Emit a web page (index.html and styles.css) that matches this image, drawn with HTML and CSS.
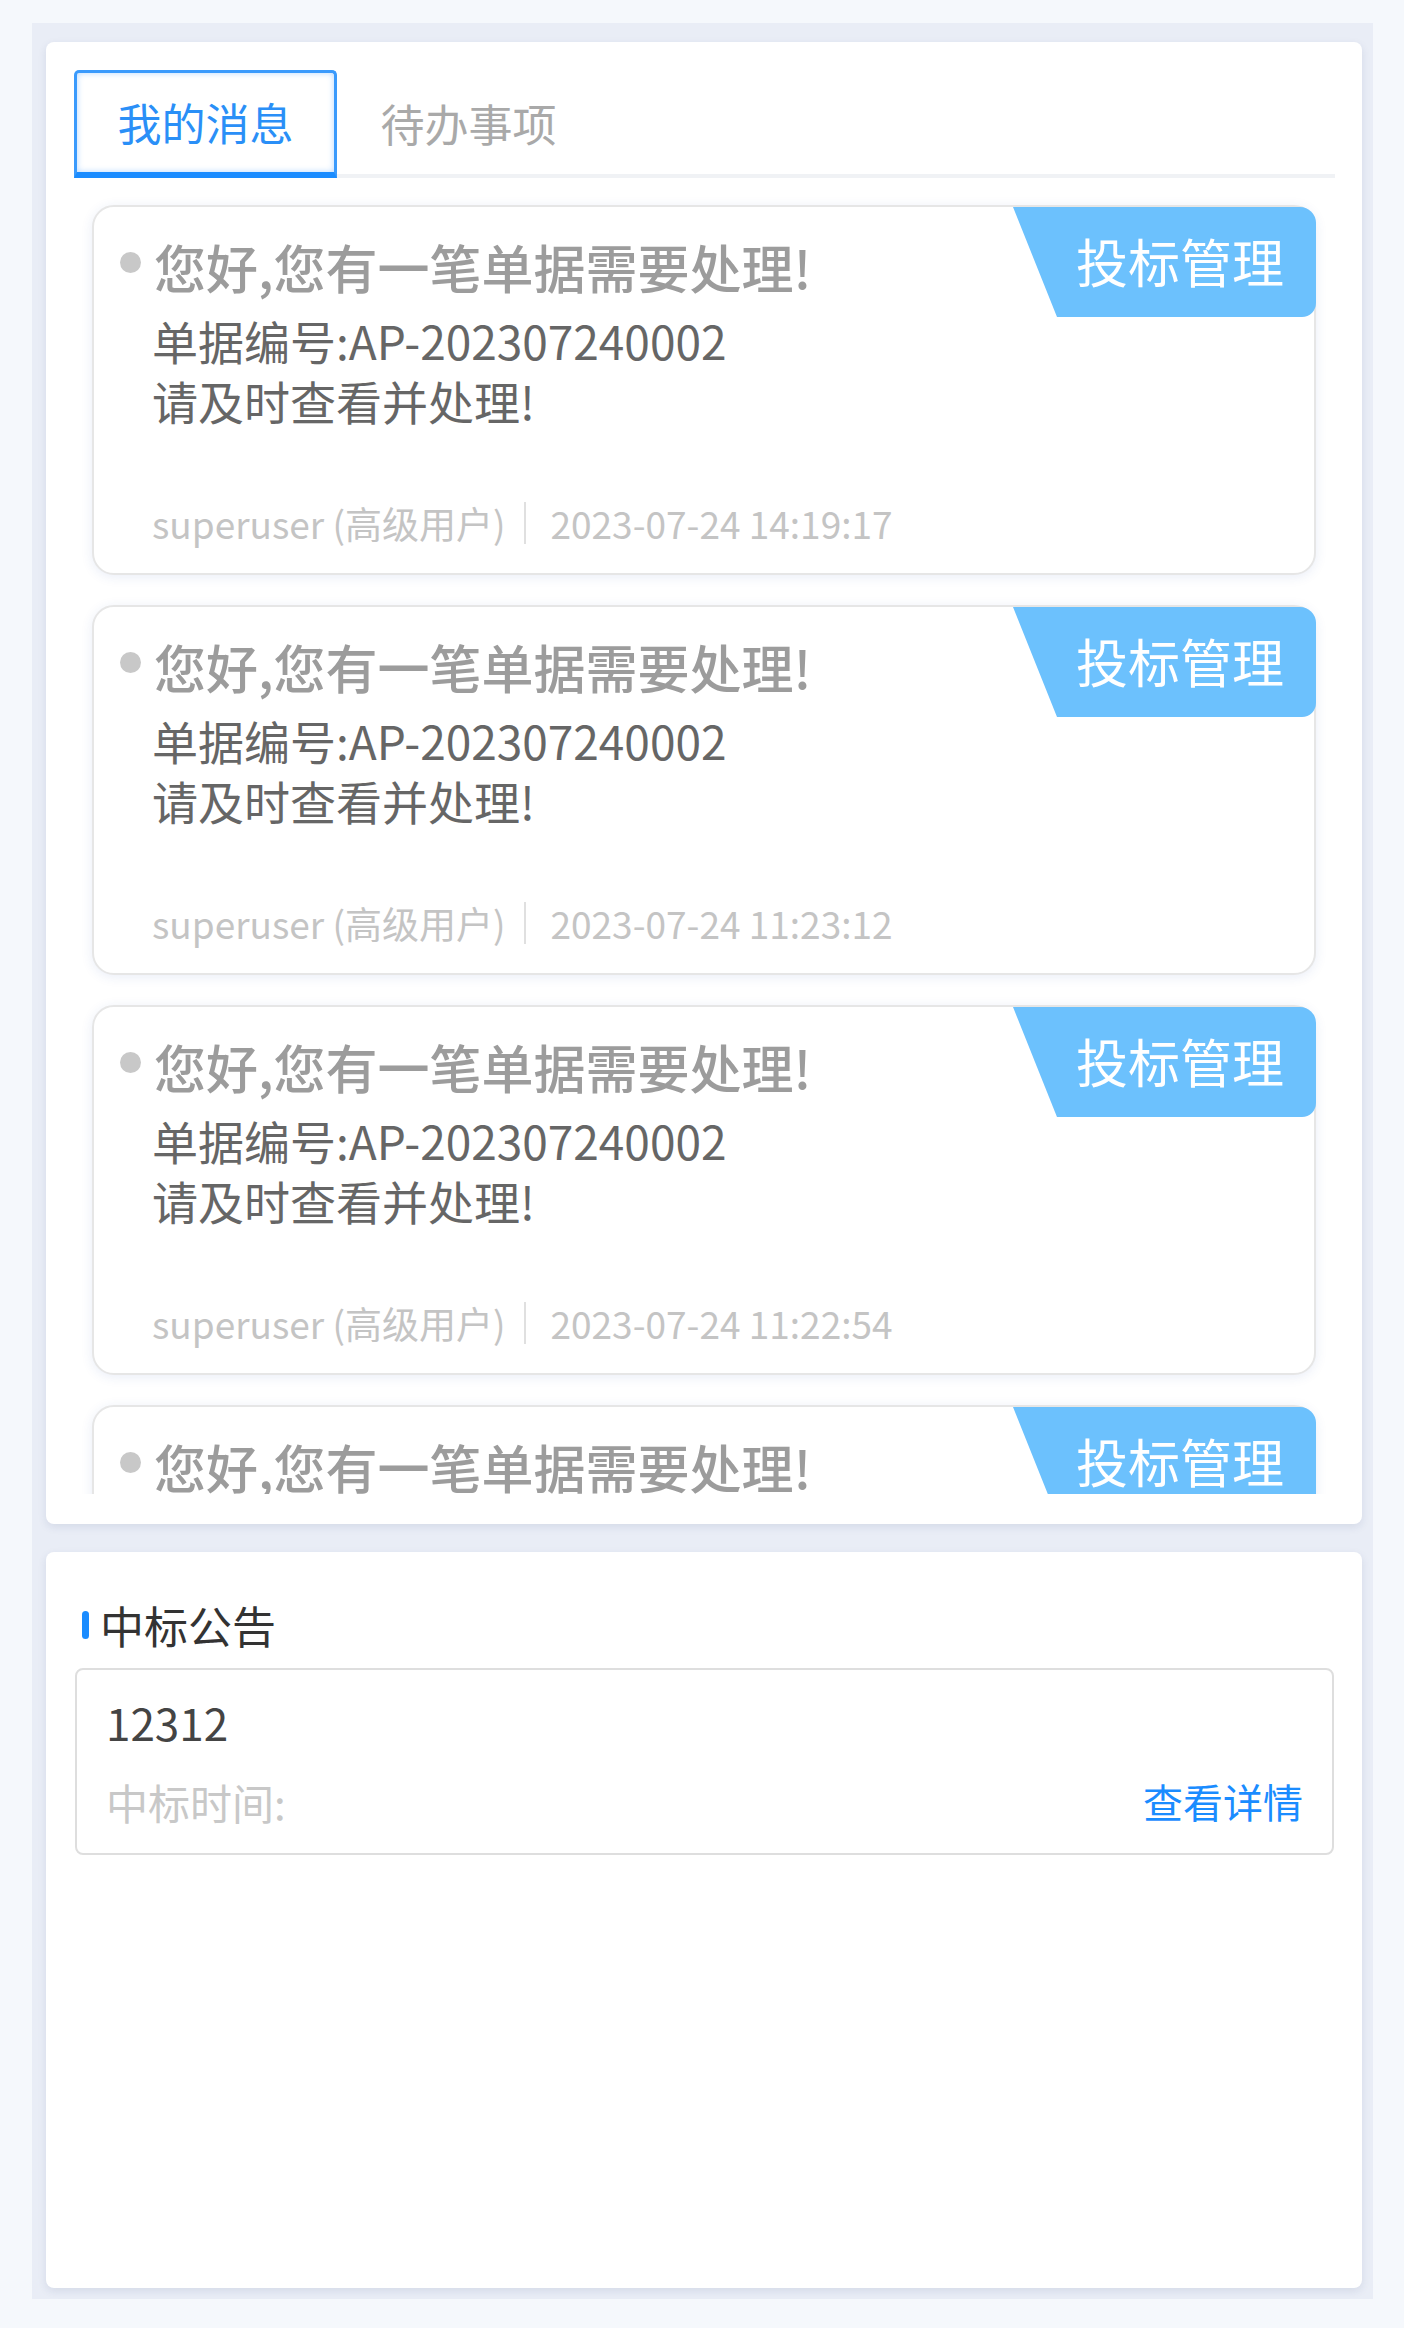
FILE: index.html
```html
<!DOCTYPE html>
<html lang="zh-CN">
<head>
<meta charset="utf-8">
<title>消息</title>
<link rel="stylesheet" href="styles.css">
</head>
<body>
<div class="page">
  <div class="panel">
    <section class="card messages">
      <div class="tabs">
        <div class="tab active">我的消息</div>
        <div class="tab">待办事项</div>
      </div>
      <div class="msg-list">
        <div class="msg">
          <span class="badge">投标管理</span>
          <div class="msg-title"><span class="dot"></span>您好,您有一笔单据需要处理!</div>
          <div class="msg-body">单据编号:AP-202307240002<br>请及时查看并处理!</div>
          <div class="msg-meta"><span>superuser (高级用户)</span><span class="sep"></span><span>2023-07-24 14:19:17</span></div>
        </div>
        <div class="msg">
          <span class="badge">投标管理</span>
          <div class="msg-title"><span class="dot"></span>您好,您有一笔单据需要处理!</div>
          <div class="msg-body">单据编号:AP-202307240002<br>请及时查看并处理!</div>
          <div class="msg-meta"><span>superuser (高级用户)</span><span class="sep"></span><span>2023-07-24 11:23:12</span></div>
        </div>
        <div class="msg">
          <span class="badge">投标管理</span>
          <div class="msg-title"><span class="dot"></span>您好,您有一笔单据需要处理!</div>
          <div class="msg-body">单据编号:AP-202307240002<br>请及时查看并处理!</div>
          <div class="msg-meta"><span>superuser (高级用户)</span><span class="sep"></span><span>2023-07-24 11:22:54</span></div>
        </div>
        <div class="msg">
          <span class="badge">投标管理</span>
          <div class="msg-title"><span class="dot"></span>您好,您有一笔单据需要处理!</div>
          <div class="msg-body">单据编号:AP-202307240002<br>请及时查看并处理!</div>
          <div class="msg-meta"><span>superuser (高级用户)</span><span class="sep"></span><span>2023-07-24 11:20:31</span></div>
        </div>
      </div>
    </section>
    <section class="card notice">
      <div class="notice-title"><span class="bar"></span>中标公告</div>
      <div class="notice-box">
        <div class="notice-name">12312</div>
        <div class="notice-row">
          <span class="notice-time">中标时间:</span>
          <span class="notice-link">查看详情</span>
        </div>
      </div>
    </section>
  </div>
</div>
</body>
</html>
```
FILE: styles.css
```css
* { box-sizing: border-box; }
html, body {
  margin: 0;
  padding: 0;
  background: #f5f8fc;
  font-family: "Noto Sans CJK SC", "Noto Sans", "Liberation Sans", sans-serif;
}
.page {
  padding: 23px 31px 29px 32px;
}
.panel {
  background: #e9edf6;
  padding: 19px 11px 11px 14px;
  display: flex;
  flex-direction: column;
  gap: 28px;
}
.card {
  background: #fff;
  border-radius: 8px;
  box-shadow: 0 3px 8px rgba(30, 50, 110, 0.10);
}
.messages {
  height: 1482px;
  padding: 28px 27px 30px 28px;
}
.tabs {
  display: flex;
  height: 108px;
  border-bottom: 4px solid #f0f2f5;
}
.tab {
  width: 263px;
  height: 108px;
  margin-bottom: -4px;
  display: flex;
  align-items: center;
  justify-content: center;
  font-size: 44px;
  color: #a9a9a9;
  padding-bottom: 2px;
}
.tab.active {
  color: #2a8ff7;
  border: 3px solid #3a9afc;
  border-bottom: 6px solid #1a8cff;
  border-radius: 5px 5px 0 0;
  box-shadow: inset 0 0 6px rgba(40, 140, 255, 0.35);
}
.msg-list {
  height: 1316px;
  overflow: hidden;
  padding: 27px 19px 0 18px;
  display: flex;
  flex-direction: column;
  gap: 30px;
}
.msg {
  position: relative;
  flex: none;
  height: 370px;
  border: 2px solid #e6e6e6;
  border-radius: 22px;
  background: #fff;
  box-shadow: 0 2px 12px rgba(40, 80, 180, 0.10);
  padding: 28px 0 25px 26px;
  display: flex;
  flex-direction: column;
}
.badge {
  position: absolute;
  top: 0;
  right: -2px;
  width: 303px;
  height: 110px;
  background: #6cc1fd;
  color: #fff;
  font-size: 52px;
  line-height: 108px;
  text-align: right;
  padding-right: 32px;
  border-radius: 0 16px 14px 0;
  clip-path: polygon(0 0, 100% 0, 100% 100%, 44px 100%);
}
.msg-title {
  display: flex;
  align-items: center;
  font-size: 52px;
  line-height: 64px;
  font-weight: 500;
  color: #9c9c9c;
}
.dot {
  width: 21px;
  height: 21px;
  border-radius: 50%;
  background: #c8c8c8;
  margin-right: 13px;
  margin-bottom: 10px;
  flex: none;
}
.msg-body {
  margin-top: 11px;
  padding-left: 32px;
  font-size: 46px;
  line-height: 60px;
  color: #666;
}
.msg-meta {
  margin-top: auto;
  padding-left: 32px;
  display: flex;
  align-items: center;
  height: 50px;
  font-size: 37px;
  color: #c4c4c4;
}
.sep {
  width: 2px;
  height: 42px;
  background: #e0e0e0;
  margin: 0 25px 0 18px;
}
.notice {
  height: 736px;
  padding: 43px 28px 0 29px;
}
.notice-title {
  display: flex;
  align-items: center;
  padding-left: 7px;
  font-size: 44px;
  line-height: 60px;
  color: #333;
}
.bar {
  width: 7px;
  height: 28px;
  border-radius: 4px;
  background: #1a8cff;
  margin-right: 11px;
}
.notice-box {
  margin-top: 13px;
  border: 2px solid #dedede;
  border-radius: 8px;
  padding: 24px 29px 24px 29px;
}
.notice-name {
  font-size: 44px;
  line-height: 56px;
  color: #444;
}
.notice-row {
  margin-top: 23px;
  display: flex;
  justify-content: space-between;
  align-items: center;
  height: 56px;
}
.notice-time {
  font-size: 42px;
  color: #c8c8c8;
}
.notice-link {
  font-size: 40px;
  color: #1a8cff;
}
```
